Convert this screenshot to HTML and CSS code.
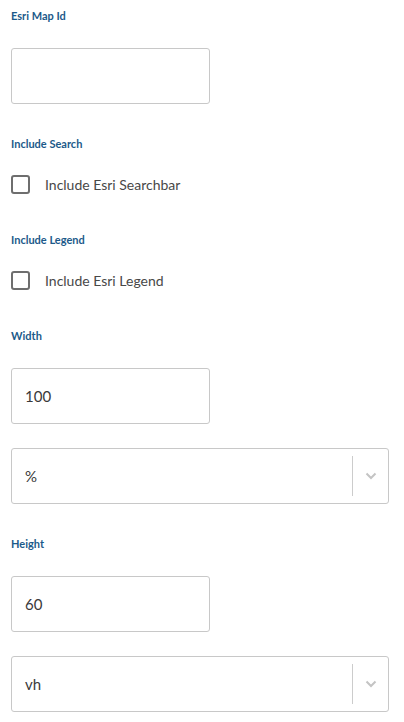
FILE: index.html
```html
<!DOCTYPE html>
<html lang="en">
<head>
    <meta charset="UTF-8">
    <meta name="viewport" content="width=device-width, initial-scale=1.0">
    <title>Esri Map Settings</title>
    <link rel="stylesheet" href="styles.css">
</head>
<body>
    <div class="form">
        <div class="field">
            <label class="field-label">Esri Map Id</label>
            <input class="text-input" type="text" value="">
        </div>

        <div class="field">
            <label class="field-label">Include Search</label>
            <label class="check-row">
                <span class="check-box"></span>
                <span class="check-text">Include Esri Searchbar</span>
            </label>
        </div>

        <div class="field">
            <label class="field-label">Include Legend</label>
            <label class="check-row">
                <span class="check-box"></span>
                <span class="check-text">Include Esri Legend</span>
            </label>
        </div>

        <div class="field">
            <label class="field-label">Width</label>
            <input class="text-input" type="text" value="100">
            <!-- unit dropdown -->
            <div class="select">
                <span class="select-value">%</span>
                <span class="select-sep"></span>
                <span class="select-arrow">
                    <svg width="12" height="8" viewBox="0 0 12 8"><path d="M1.5 1.5 L6 6 L10.5 1.5" fill="none" stroke="#c4c4c4" stroke-width="2"/></svg>
                </span>
            </div>
        </div>

        <div class="field">
            <label class="field-label">Height</label>
            <input class="text-input" type="text" value="60">
            <div class="select">
                <span class="select-value">vh</span>
                <span class="select-sep"></span>
                <span class="select-arrow">
                    <svg width="12" height="8" viewBox="0 0 12 8"><path d="M1.5 1.5 L6 6 L10.5 1.5" fill="none" stroke="#c4c4c4" stroke-width="2"/></svg>
                </span>
            </div>
        </div>
    </div>
</body>
</html>
```

FILE: styles.css
```css
* {
    box-sizing: border-box;
    margin: 0;
    padding: 0;
}

body {
    background-color: #ffffff;
    font-family: "Lato", "Liberation Sans", sans-serif;
    color: #333333;
}

.form {
    display: flex;
    flex-direction: column;
    padding: 8px 15px 0 11px;
}

.field {
    display: flex;
    flex-direction: column;
    align-items: flex-start;
    margin-bottom: 32px;
}

.field-label {
    font-size: 11px;
    font-weight: 700;
    line-height: 16px;
    color: #1c5a8a;
    margin-bottom: 16px;
}

.text-input {
    width: 199px;
    height: 56px;
    margin-top: 8px;
    padding: 0 13px;
    border: 1px solid #c8c8c8;
    border-radius: 3px;
    font-family: "Lato", "Liberation Sans", sans-serif;
    font-size: 15px;
    color: #3a3a3a;
    outline: none;
}

/* Checkbox rows */
.check-row {
    display: flex;
    align-items: center;
    height: 32px;
}

.check-box {
    width: 19px;
    height: 19px;
    border: 2px solid #6e6e6e;
    border-radius: 3px;
}

.check-text {
    margin-left: 15px;
    font-size: 14px;
    color: #484848;
}

/* Select dropdown */
.select {
    display: flex;
    align-items: center;
    width: 100%;
    height: 56px;
    margin-top: 24px;
    border: 1px solid #c8c8c8;
    border-radius: 3px;
}

.select-value {
    flex: 1;
    padding-left: 13px;
    font-size: 15px;
    color: #3a3a3a;
}

.select-sep {
    width: 1px;
    height: 40px;
    background-color: #cccccc;
}

.select-arrow {
    display: flex;
    justify-content: center;
    align-items: center;
    width: 35px;
}
```
